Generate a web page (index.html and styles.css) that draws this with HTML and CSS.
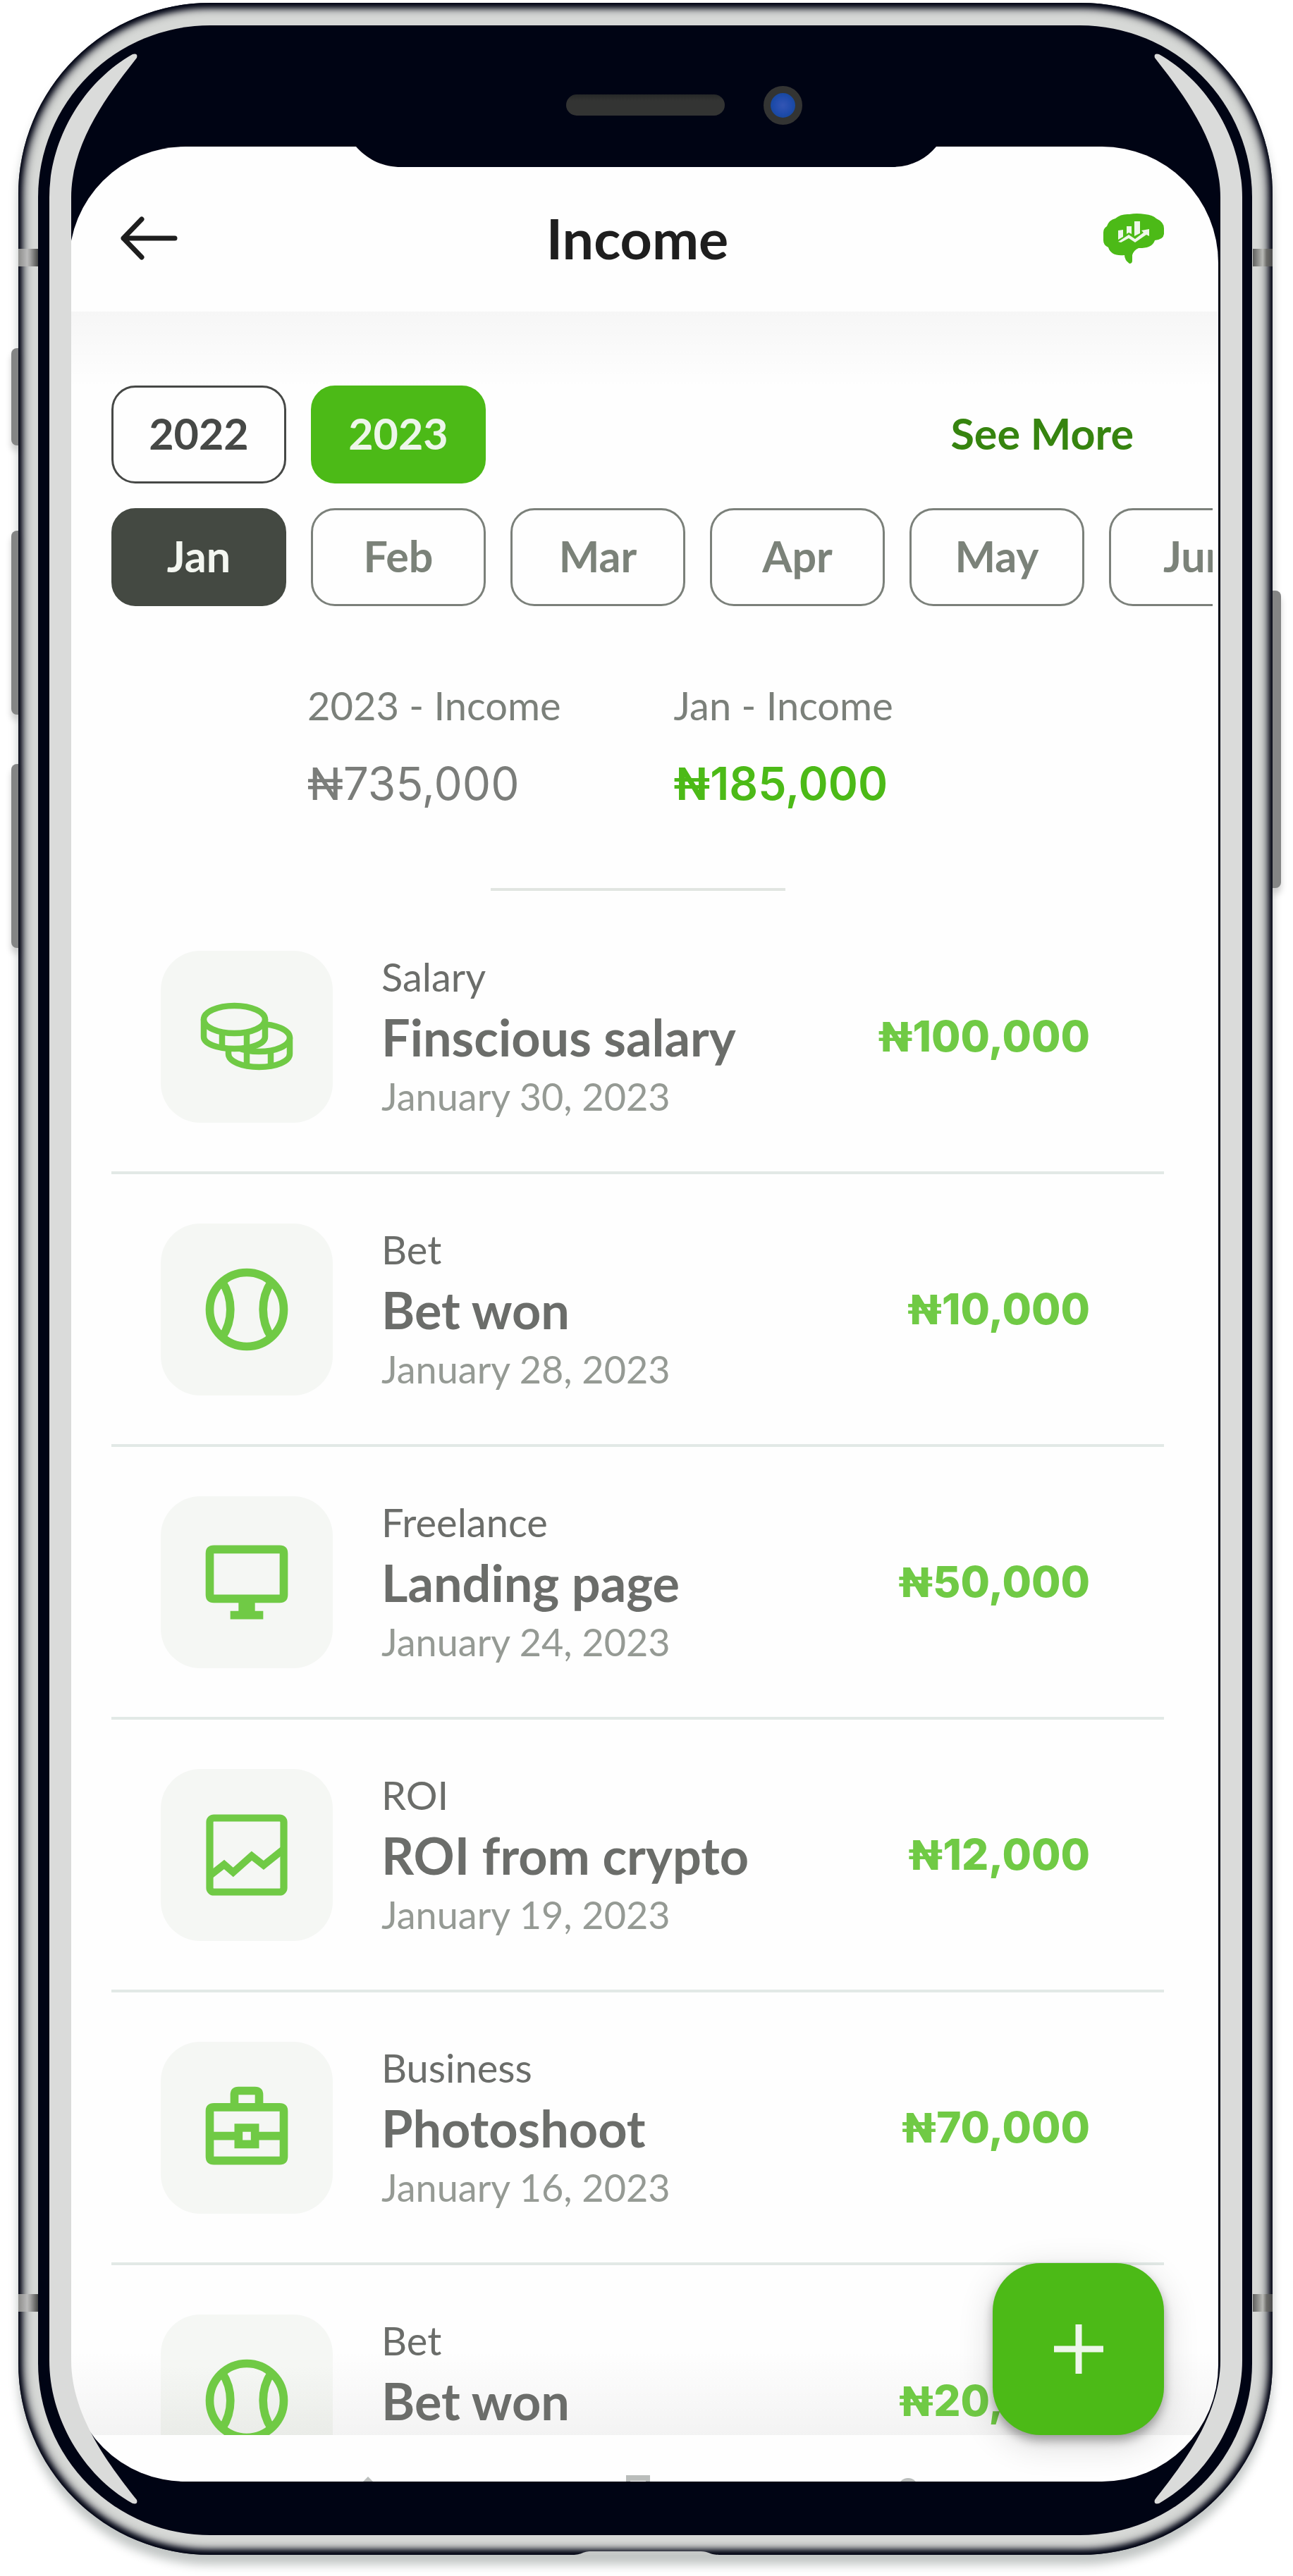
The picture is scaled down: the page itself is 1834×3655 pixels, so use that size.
FILE: index.html
```html
<!DOCTYPE html>
<html lang="en">
<head>
<meta charset="utf-8">
<meta name="viewport" content="width=device-width, initial-scale=1">
<title>Income</title>
<link rel="stylesheet" href="styles.css">
</head>
<body>
<svg class="defs" width="0" height="0" aria-hidden="true">
  <symbol id="ball" viewBox="0 0 24 24">
    <g fill="none" stroke="currentColor" stroke-width="2">
      <circle cx="12" cy="12" r="9"/>
      <path d="M6 5.2c2.700 4.100 2.700 9.500 0 13.600M18 5.200c-2.700 4.100-2.700 9.500 0 13.600"/>
    </g>
  </symbol>
  <symbol id="glare" viewBox="0 0 126 204">
    <path fill="#dadbda" d="M0 204C0 124 46 42 118 1Q126-1 124 6C90 50 31 122 31 204Z"/>
  </symbol>
</svg>

<div class="phone">
  <span class="key key-mute"></span>
  <span class="key key-up"></span>
  <span class="key key-down"></span>
  <span class="key key-power"></span>
  <span class="band band-tl"></span>
  <span class="band band-tr"></span>
  <span class="band band-bl"></span>
  <span class="band band-br"></span>
  <svg class="slot" viewBox="0 0 208 6" aria-hidden="true"><path fill="#c6c9c8" d="M0 6C14 6 14 1 26 1H182C194 1 194 6 208 6Z"/></svg>

  <div class="bezel">
    <div class="sensors">
      <span class="speaker"></span>
      <span class="camera"></span>
    </div>

    <div class="screen">
      <svg class="notch" viewBox="0 0 823 30" aria-hidden="true"><path fill="#000414" d="M0 0C16 18 37 29 64 29H760C787 29 808 18 823 0Z"/></svg>

      <header class="topbar">
        <button class="icon-button" type="button" aria-label="Back">
          <svg class="back" viewBox="0 0 82 62" aria-hidden="true"><path d="M78 31H5M31 4L5 31L31 58" fill="none" stroke="#1e1e1e" stroke-width="7" stroke-linecap="round" stroke-linejoin="round"/></svg>
        </button>
        <h1 class="title">Income</h1>
        <a class="brand" href="#" aria-label="Insights">
          <svg viewBox="0 0 88 71" aria-hidden="true">
            <path fill="#4cba17" d="M1 27Q1 21 6 18Q9 9 18 7Q26 0 38 1Q48-1 60 1Q71 2 76 7Q87 12 87 21V29Q86 37 74 38Q71 48 56 49H51Q44 52 42 59V67Q42 71 38 71Q31 66 31 59Q12 61 8 48Q1 45 1 38Z"/>
            <g fill="#eef7ea"><path d="M22 24L29 23V33L22 37ZM34 18H41V29L37 27L34 29ZM45 11H53V28L45 32Z"/><path d="M22 40L37 30L46 36L58 27L55 24L66 22V32L62 30L46 41L37 35L26 41Z"/></g>
          </svg>
        </a>
      </header>

      <main class="content">
        <div class="filters">
          <div class="years">
            <button class="chip chip-year" type="button">2022</button>
            <button class="chip chip-year-on" type="button">2023</button>
            <a class="more" href="#">See More</a>
          </div>
          <div class="months">
            <button class="chip chip-month-on" type="button">Jan</button>
            <button class="chip" type="button">Feb</button>
            <button class="chip" type="button">Mar</button>
            <button class="chip" type="button">Apr</button>
            <button class="chip" type="button">May</button>
            <button class="chip" type="button">Jun</button>
          </div>
        </div>

        <dl class="summary">
          <div class="total">
            <dt>2023 - Income</dt>
            <dd><span class="naira">₦</span>735,000</dd>
          </div>
          <div class="total total-on">
            <dt>Jan - Income</dt>
            <dd><span class="naira">₦</span>185,000</dd>
          </div>
        </dl>
        <hr class="rule">

        <ul class="entries">
          <li class="entry">
            <span class="tile"><svg viewBox="0 0 140 140" aria-hidden="true">
              <g fill="#f5f7f4" stroke="currentColor" stroke-width="8.500">
                <path d="M44 71V94C44 105 63 113 87.500 113S131 105 131 94V71"/>
                <ellipse cx="87.500" cy="71.500" rx="43.500" ry="19.500"/>
                <path d="M70 90V111M104 90V111"/>
                <path d="M9 45V70C9 80 28 87 52.500 87S96 80 96 70V45"/>
                <path d="M35 63V84M70 63V84"/>
                <ellipse cx="52.500" cy="45.500" rx="43.500" ry="19.500"/>
              </g></svg></span>
            <div class="info"><p class="kind">Salary</p><h2 class="name">Finscious salary</h2><p class="date">January 30, 2023</p></div>
            <p class="amount"><span class="naira">₦</span>100,000</p>
          </li>
          <li class="entry">
            <span class="tile"><svg viewBox="0 0 24 24" aria-hidden="true"><use href="#ball"/></svg></span>
            <div class="info"><p class="kind">Bet</p><h2 class="name">Bet won</h2><p class="date">January 28, 2023</p></div>
            <p class="amount"><span class="naira">₦</span>10,000</p>
          </li>
          <li class="entry">
            <span class="tile"><svg viewBox="0 0 24 24" aria-hidden="true"><path fill="currentColor" fill-rule="evenodd" d="M4 3H20Q22 3 22 5V15Q22 17 20 17H14V19H16V21H8V19H10V17H4Q2 17 2 15V5Q2 3 4 3ZM4 5V15H20V5Z"/></svg></span>
            <div class="info"><p class="kind">Freelance</p><h2 class="name">Landing page</h2><p class="date">January 24, 2023</p></div>
            <p class="amount"><span class="naira">₦</span>50,000</p>
          </li>
          <li class="entry">
            <span class="tile"><svg viewBox="0 0 24 24" aria-hidden="true"><g fill="none" stroke="currentColor" stroke-width="1.750"><rect x="3" y="3" width="18" height="18" rx="1"/><path d="M3.200 16.900L6.500 14.300L8.700 16.200L13.200 12.200L16.100 14.500L20.800 10.700"/></g></svg></span>
            <div class="info"><p class="kind">ROI</p><h2 class="name">ROI from crypto</h2><p class="date">January 19, 2023</p></div>
            <p class="amount"><span class="naira">₦</span>12,000</p>
          </li>
          <li class="entry">
            <span class="tile"><svg viewBox="0 0 24 24" aria-hidden="true"><path fill="currentColor" fill-rule="evenodd" d="M10 2H14Q16 2 16 4V6H20Q22 6 22 8V19Q22 21 20 21H4Q2 21 2 19V8Q2 6 4 6H8V4Q8 2 10 2ZM10 4V6H14V4ZM4 8V13H9V11H15V13H20V8ZM11 13V15H13V13ZM4 15V19H20V15H15V17H9V15Z"/></svg></span>
            <div class="info"><p class="kind">Business</p><h2 class="name">Photoshoot</h2><p class="date">January 16, 2023</p></div>
            <p class="amount"><span class="naira">₦</span>70,000</p>
          </li>
          <li class="entry">
            <span class="tile"><svg viewBox="0 0 24 24" aria-hidden="true"><use href="#ball"/></svg></span>
            <div class="info"><p class="kind">Bet</p><h2 class="name">Bet won</h2></div>
            <p class="amount"><span class="naira">₦</span>20,000</p>
          </li>
        </ul>
      </main>

      <nav class="tabs" aria-label="Main">
        <a href="#" aria-label="Home"><svg viewBox="0 0 40 40" aria-hidden="true"><path fill="#babdbb" d="M20 2L40 22V40H0V22Z"/></svg></a>
        <a href="#" aria-label="Records"><svg viewBox="0 0 40 40" aria-hidden="true"><path fill="#babdbb" fill-rule="evenodd" d="M3 0H37V40H3ZM9 8V34H31V8Z"/></svg></a>
        <a href="#" aria-label="Profile"><svg viewBox="0 0 40 40" aria-hidden="true"><circle cx="20" cy="18" r="14" fill="#babdbb"/></svg></a>
      </nav>

      <button class="add" type="button" aria-label="Add income">
        <svg viewBox="0 0 70 70" aria-hidden="true"><path d="M35 0V70M0 35H70" stroke="#edf6ea" stroke-width="9"/></svg>
      </button>
    </div>
  </div>

  <span class="edge edge-left"></span>
  <span class="edge edge-right"></span>
  <svg class="glare glare-tl" aria-hidden="true"><use href="#glare"/></svg>
  <svg class="glare glare-tr" aria-hidden="true"><use href="#glare"/></svg>
  <svg class="glare glare-bl" aria-hidden="true"><use href="#glare"/></svg>
  <svg class="glare glare-br" aria-hidden="true"><use href="#glare"/></svg>
</div>
</body>
</html>
```

FILE: styles.css
```css
:root {
  --shell: #000414;
  --steel: #dadbda;
  --green: #4cba17;
  --leaf: #70ca45;
  --ink: #6b6d6a;
}

* { box-sizing: border-box; }

body {
  margin: 0;
  background: #fff;
  font-family: Lato, "Liberation Sans", sans-serif;
}

h1, h2, p, dl, dd, ul { margin: 0; padding: 0; }
button { padding: 0; border: 0; background: none; font: inherit; cursor: pointer; }
a { text-decoration: none; }
svg { display: block; }
.defs { position: absolute; }

/* Device shell */
.phone {
  position: relative;
  margin: 4px 29px 31px 26px;
  padding: 32px 29px 28px 28px;
  border-radius: 272px;
  background: #d6d8d6;
  box-shadow:
    inset 0 5px 8px var(--shell),
    inset 0 -5px 8px var(--shell),
    inset 0 0 14px 6px var(--shell),
    0 14px 14px rgba(20, 35, 30, .26);
}

.bezel {
  padding: 0 48px 76px 44px;
  border-radius: 244px;
  background: var(--shell);
}

.key {
  position: absolute;
  left: -10px;
  width: 10px;
  border-radius: 8px 0 0 8px;
  background: #848585;
  box-shadow: 0 8px 10px rgba(0, 0, 0, .18);
}
.key-mute { top: 490px; height: 138px; }
.key-up { top: 749px; height: 261px; }
.key-down { top: 1080px; height: 261px; }
.key-power {
  top: 834px;
  right: -12px;
  left: auto;
  width: 12px;
  height: 422px;
  border-radius: 0 8px 8px 0;
}

.band {
  position: absolute;
  width: 28px;
  height: 25px;
  background: linear-gradient(90deg, #8c8c8b, #bababa 45%, #a4a4a3 60%, #4a4b49);
}
.band-tl { top: 349px; left: 0; }
.band-tr { top: 349px; right: 0; }
.band-bl { bottom: 345px; left: 0; }
.band-br { bottom: 345px; right: 0; }
.band-tr, .band-br { background: linear-gradient(90deg, #5f605e, #b9bab6 50%, #6b6b68 70%, #4a4a4c); }

.slot {
  position: absolute;
  bottom: 0;
  left: 50%;
  width: 208px;
  height: 6px;
  margin-left: -104px;
}

.edge {
  position: absolute;
  top: 275px;
  bottom: 275px;
  width: 31px;
  background: var(--steel);
}
.edge-left { left: 44px; }
.edge-right { right: 43px; }

.glare { position: absolute; width: 126px; height: 204px; }
.glare-tl { top: 72px; left: 44px; }
.glare-tr { top: 72px; right: 43px; transform: scaleX(-1); }
.glare-bl { bottom: 72px; left: 44px; transform: scaleY(-1); }
.glare-br { bottom: 72px; right: 43px; transform: scale(-1, -1); }

.sensors {
  display: grid;
  grid-template-columns: 1fr 225px 1fr;
  gap: 55px;
  align-items: center;
  height: 172px;
  padding: 56px 0 2px 4px;
}
.speaker {
  grid-column: 2;
  height: 30px;
  border-radius: 15px;
  background: linear-gradient(#262828, #333433 30%);
}
.camera {
  width: 55px;
  height: 55px;
  border: 10px solid #333433;
  border-radius: 50%;
  background: radial-gradient(circle, #3355b4, #1f4bab 50%, #0f4590);
}

/* App screen */
.screen {
  position: relative;
  overflow: hidden;
  border-radius: 165px;
  background: #fefefe;
}
.notch {
  position: absolute;
  top: 0;
  left: 50%;
  width: 823px;
  height: 30px;
  margin-left: -408px;
}

.topbar {
  display: grid;
  grid-template-columns: 88px 1fr 102px;
  align-items: center;
  height: 234px;
  padding: 30px 76px 4px 72px;
}
.back { width: 82px; height: 62px; }
.title {
  color: #1e1e1e;
  font-size: 79px;
  font-weight: 700;
  line-height: 96px;
  text-align: center;
}
.brand svg { width: 88px; height: 71px; margin-left: auto; }

.content {
  padding: 105px 77px 0 60px;
  background:
    linear-gradient(transparent, rgba(0, 0, 0, .045)) bottom / 100% 120px no-repeat,
    linear-gradient(rgba(0, 0, 0, .032), transparent) top / 100% 110px no-repeat;
}

.filters { display: grid; gap: 35px; }
.years, .months { display: flex; gap: 35px; }
.months { margin-right: -69px; overflow: hidden; }

.chip {
  flex: none;
  width: 248px;
  height: 139px;
  padding-bottom: 4px;
  border: 3px solid #7b807a;
  border-radius: 34px;
  color: #7b8279;
  font-size: 61px;
  font-weight: 700;
}
.chip-year { border-color: #464846; color: #464846; }
.chip-year-on { border-color: var(--green); background: var(--green); color: #edf6ea; }
.chip-month-on { border-color: #444942; background: #444942; color: #f3f6f0; }

.more {
  align-self: center;
  margin: 0 43px 0 auto;
  padding-bottom: 4px;
  color: #36840f;
  font-size: 61px;
  font-weight: 700;
}

.summary {
  display: flex;
  gap: 160px;
  padding: 110px 0 110px 278px;
}
.total { display: grid; gap: 44px; }
.total dt {
  color: #7b807a;
  font-size: 56px;
  line-height: 62px;
}
.total dd, .amount { font-family: Inter, "Liberation Sans", sans-serif; }
.total dd {
  color: #7b7d7a;
  font-size: 64px;
  line-height: 72px;
}
.total-on dd { color: var(--green); font-weight: 600; }
.naira { font-family: Roboto, "Noto Sans", sans-serif; }

.rule {
  width: 418px;
  height: 4px;
  margin: 0 auto;
  border: 0;
  background: #e1e5e1;
}

.entries { margin-top: 15px; list-style: none; }
.entry {
  display: flex;
  align-items: center;
  padding: 70px 105px 69px 70px;
  border-bottom: 4px solid #e2e9e6;
}
.tile {
  display: grid;
  place-items: center;
  flex: none;
  width: 244px;
  height: 244px;
  border-radius: 56px;
  background: #f5f7f4;
  color: var(--leaf);
}
.tile svg { width: 140px; height: 140px; }
.info { display: grid; gap: 14px; margin-left: 69px; }
.kind { color: var(--ink); font-size: 56px; line-height: 62px; }
.date { color: #959a94; font-size: 54px; line-height: 62px; }
.name {
  color: var(--ink);
  font-size: 72px;
  font-weight: 700;
  line-height: 80px;
}
.amount {
  margin-left: auto;
  color: var(--leaf);
  font-size: 60px;
  font-weight: 800;
  line-height: 72px;
}

/* The last row is cut off by the tab bar */
.entry:last-child {
  align-items: flex-start;
  height: 241px;
  padding-bottom: 0;
  border: 0;
  overflow: hidden;
}
.entry:last-child .tile { background: linear-gradient(#f5f7f4 30%, #eaece8 70%); }
.entry:last-child .info { margin-top: 6px; }
.entry:last-child .amount { margin-top: 86px; }

.tabs {
  display: flex;
  justify-content: center;
  gap: 343px;
  height: 66px;
  padding: 57px 16px 0 0;
}
.tabs svg { width: 40px; height: 40px; }

.add {
  position: absolute;
  right: 77px;
  bottom: 66px;
  display: grid;
  place-items: center;
  width: 243px;
  height: 244px;
  border-radius: 68px;
  background: var(--green);
  box-shadow: 0 8px 14px rgba(0, 0, 0, .3), 0 12px 50px rgba(0, 0, 0, .16);
}
.add svg { width: 70px; height: 70px; }
```
